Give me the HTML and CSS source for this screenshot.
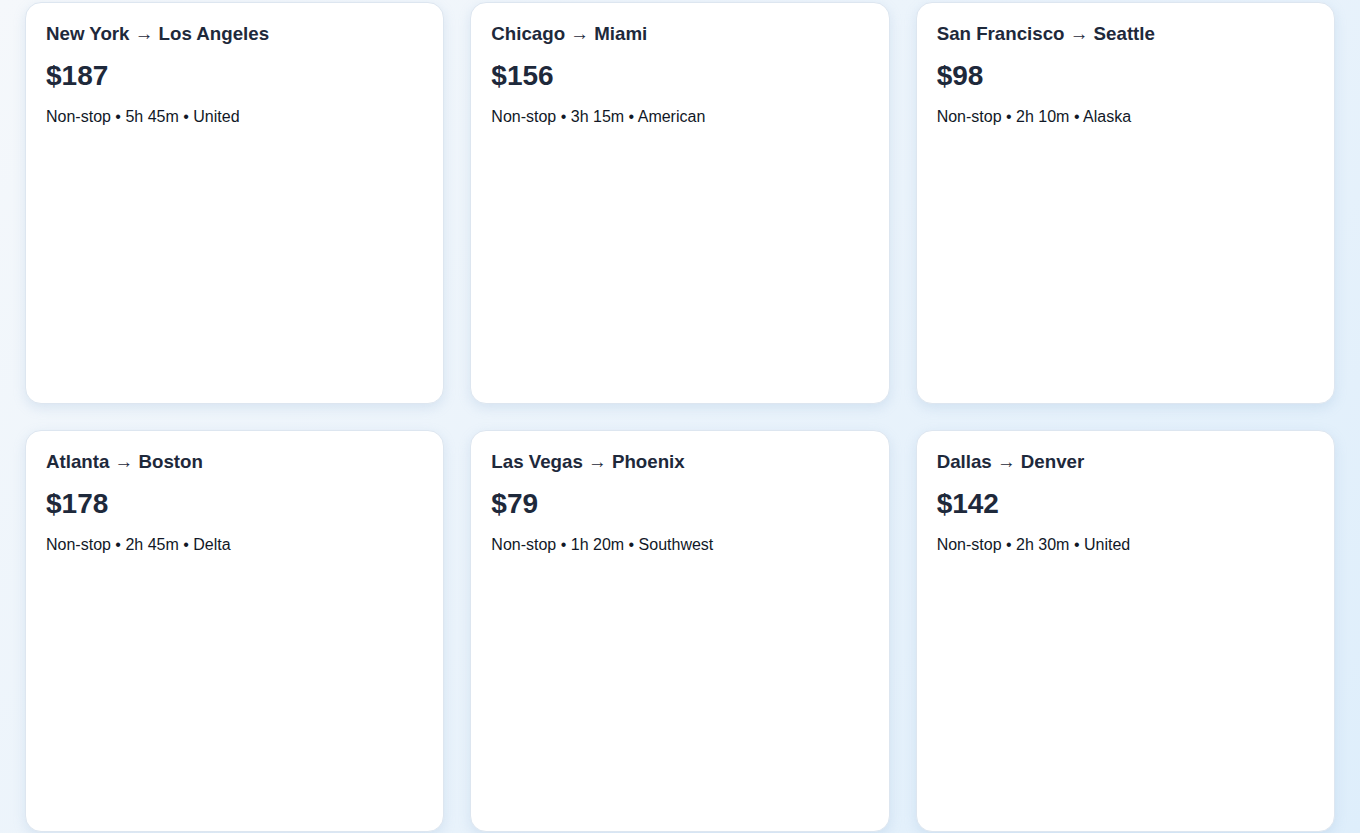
FILE: index.html
```html
<!DOCTYPE html>
<html>
<head>
<meta charset="utf-8">
<link rel="stylesheet" href="styles.css">
</head>
<body>
<main class="grid">
  <div class="card">
    <div class="route">New York → Los Angeles</div>
    <div class="price">$187</div>
    <div class="meta">Non-stop • 5h 45m • United</div>
  </div>
  <div class="card">
    <div class="route">Chicago → Miami</div>
    <div class="price">$156</div>
    <div class="meta">Non-stop • 3h 15m • American</div>
  </div>
  <div class="card">
    <div class="route">San Francisco → Seattle</div>
    <div class="price">$98</div>
    <div class="meta">Non-stop • 2h 10m • Alaska</div>
  </div>
  <div class="card">
    <div class="route">Atlanta → Boston</div>
    <div class="price">$178</div>
    <div class="meta">Non-stop • 2h 45m • Delta</div>
  </div>
  <div class="card">
    <div class="route">Las Vegas → Phoenix</div>
    <div class="price">$79</div>
    <div class="meta">Non-stop • 1h 20m • Southwest</div>
  </div>
  <div class="card">
    <div class="route">Dallas → Denver</div>
    <div class="price">$142</div>
    <div class="meta">Non-stop • 2h 30m • United</div>
  </div>
</main>
</body>
</html>
```
FILE: styles.css
```css
html, body {
  margin: 0;
  padding: 0;
  height: 100%;
  overflow: hidden;
}
body {
  font-family: "Liberation Sans", Arial, sans-serif;
  background: linear-gradient(135deg, #f5f8fb 0%, #eaf3fb 50%, #deeefb 100%);
  color: #1e293b;
}
.grid {
  display: grid;
  grid-template-columns: repeat(3, 1fr);
  grid-auto-rows: 402px;
  gap: 26px 26px;
  padding: 2px 25px 0 25px;
}
.card {
  background: #ffffff;
  border: 1px solid #dde6f0;
  border-radius: 16px;
  padding: 20px;
  box-shadow: 0 4px 12px rgba(148, 180, 215, 0.25);
}
.route {
  font-size: 18.72px;
  font-weight: 700;
  color: #1e293b;
}
.price {
  margin-top: 15px;
  font-size: 28px;
  font-weight: 700;
  color: #1e293b;
}
.meta {
  margin-top: 16px;
  font-size: 16px;
  color: #111827;
}
```
